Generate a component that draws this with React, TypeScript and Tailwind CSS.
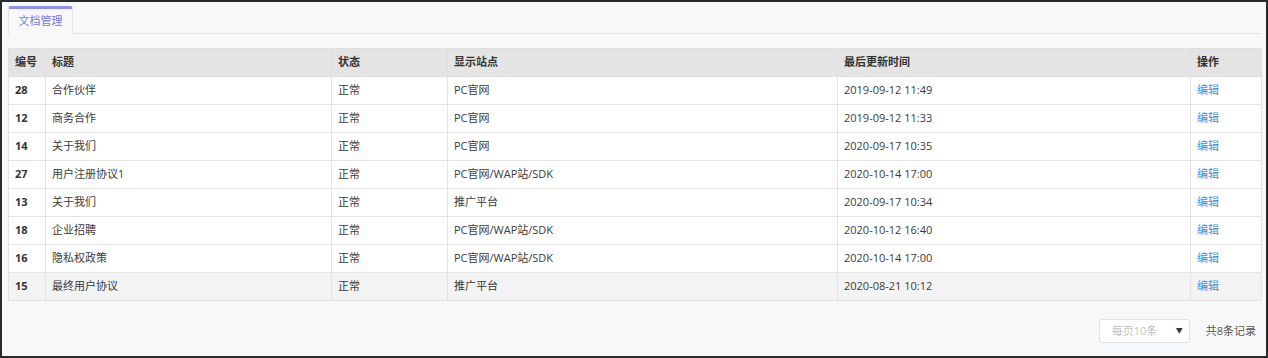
import React from 'react';

const rows = [
  { id: 28, title: '合作伙伴', status: '正常', site: 'PC官网', time: '2019-09-12 11:49' },
  { id: 12, title: '商务合作', status: '正常', site: 'PC官网', time: '2019-09-12 11:33' },
  { id: 14, title: '关于我们', status: '正常', site: 'PC官网', time: '2020-09-17 10:35' },
  { id: 27, title: '用户注册协议1', status: '正常', site: 'PC官网/WAP站/SDK', time: '2020-10-14 17:00' },
  { id: 13, title: '关于我们', status: '正常', site: '推广平台', time: '2020-09-17 10:34' },
  { id: 18, title: '企业招聘', status: '正常', site: 'PC官网/WAP站/SDK', time: '2020-10-12 16:40' },
  { id: 16, title: '隐私权政策', status: '正常', site: 'PC官网/WAP站/SDK', time: '2020-10-14 17:00' },
  { id: 15, title: '最终用户协议', status: '正常', site: '推广平台', time: '2020-08-21 10:12' },
];

const font = { fontFamily: '"Open Sans", "Noto Sans CJK SC", sans-serif' };

export default function App() {
  return (
    <div
      className="w-[1268px] h-[358px] border-2 border-[#2b2b2b] bg-[#f7f8fa] text-[11px] text-[#3a3a3a] flex flex-col"
      style={font}
    >
      {/* tabs */}
      <div className="flex items-end pl-[6px] pr-[4px] pt-[4px]">
        <div className="w-[65px] h-[28px] rounded-t-[3px] border-t-[3px] border-t-[#8d8ff2] border-x border-x-[#e3e4e8] bg-[#f7f8fa] flex items-center justify-center text-[#7478ec]">
          文档管理
        </div>
        <div className="flex-1 border-b border-[#e3e4e8]" />
      </div>

      {/* table */}
      <div className="pl-[6px] pr-[4px] pt-[14px]">
        <table className="w-full border-collapse table-fixed">
          <colgroup>
            <col className="w-[37px]" />
            <col className="w-[286px]" />
            <col className="w-[116px]" />
            <col className="w-[390px]" />
            <col className="w-[353px]" />
            <col />
          </colgroup>
          <thead>
            <tr className="h-[28px] bg-[#e4e4e4] text-left">
              {['编号', '标题', '状态', '显示站点', '最后更新时间', '操作'].map((h) => (
                <th key={h} className="px-[6px] font-bold text-[#333] border border-[#dedede]">
                  {h}
                </th>
              ))}
            </tr>
          </thead>
          <tbody>
            {rows.map((r, i) => (
              <tr key={r.id} className={`h-[28px] ${i === rows.length - 1 ? 'bg-[#f3f3f3]' : 'bg-white'}`}>
                <td className="px-[6px] font-bold text-[#333] border border-[#e3e3e3]">{r.id}</td>
                <td className="px-[6px] border border-[#e3e3e3]">{r.title}</td>
                <td className="px-[6px] border border-[#e3e3e3]">{r.status}</td>
                <td className="px-[6px] border border-[#e3e3e3]">{r.site}</td>
                <td className="px-[6px] border border-[#e3e3e3]">{r.time}</td>
                <td className="px-[6px] border border-[#e3e3e3] text-[#3d8ee0]">编辑</td>
              </tr>
            ))}
          </tbody>
        </table>
      </div>

      {/* pagination */}
      <div className="flex items-center justify-end pr-[10px] pt-[18px]">
        <div className="w-[91px] h-[24px] bg-white border border-[#e2e2e2] rounded-[3px] flex items-center justify-between pl-[12px] pr-[6px] text-[#c0c0c0]">
          <span>每页10条</span>
          <span className="text-[7px] text-[#333]">▼</span>
        </div>
        <span className="ml-[16px] text-[#555]">共8条记录</span>
      </div>
    </div>
  );
}
